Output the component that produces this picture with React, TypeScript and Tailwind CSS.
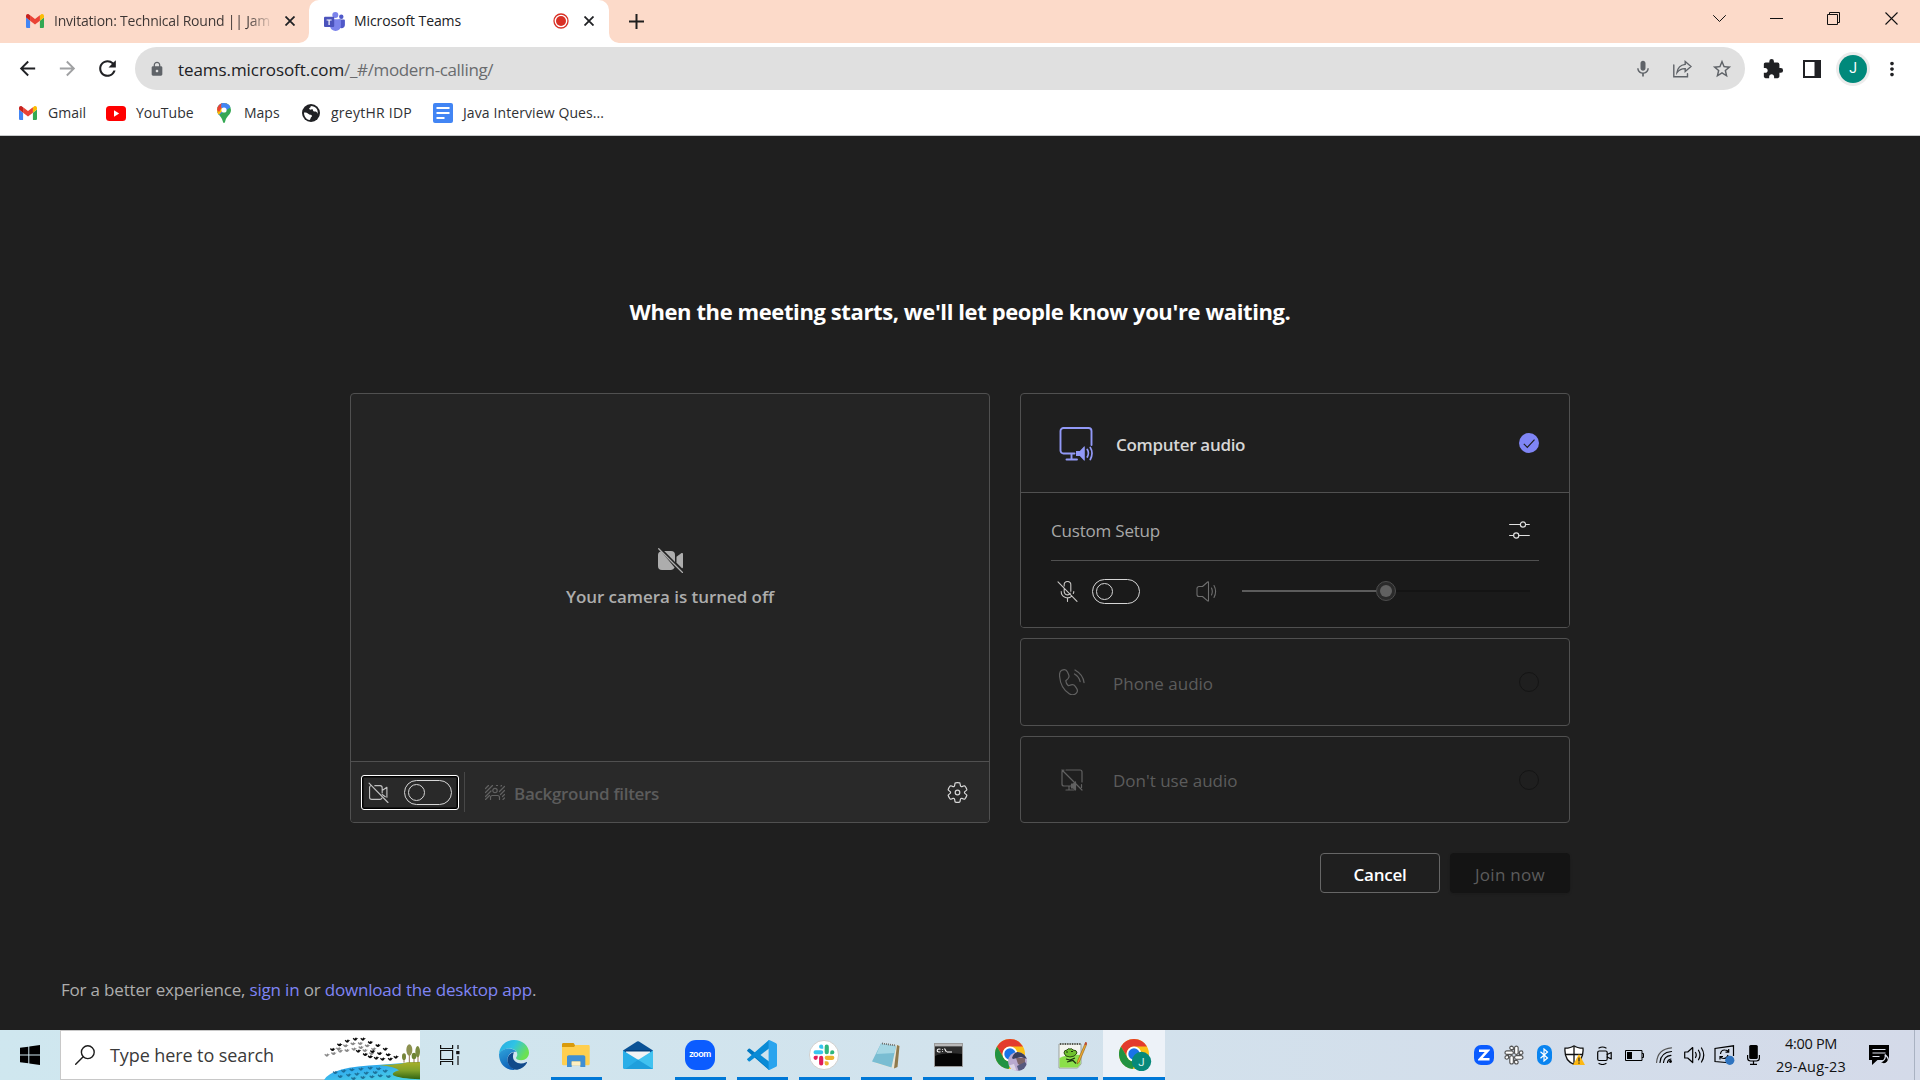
import type { ReactNode, SVGProps } from "react";
import { MdArrowBack, MdArrowForward, MdExtension, MdLock, MdMic, MdMoreVert, MdRefresh, MdStarBorder } from "react-icons/md";

type IconProps = { className?: string };

function Svg({ children, ...rest }: SVGProps<SVGSVGElement>) {
  return (
    <svg fill="none" stroke="currentColor" strokeLinecap="round" strokeLinejoin="round" {...rest}>
      {children}
    </svg>
  );
}

/* ---------- brand icons ---------- */

function Gmail({ className }: IconProps) {
  return (
    <svg viewBox="52 42 88 66" className={className} preserveAspectRatio="none">
      <path fill="#4285f4" d="M58 108h14V74L52 59v43c0 3.32 2.69 6 6 6" />
      <path fill="#34a853" d="M120 108h14c3.32 0 6-2.69 6-6V59l-20 15" />
      <path fill="#fbbc04" d="M120 48v26l20-15v-8c0-7.42-8.47-11.65-14.4-7.2" />
      <path fill="#ea4335" d="M72 74V48l24 18 24-18v26L96 92" />
      <path fill="#c5221f" d="M52 51v8l20 15V48l-5.6-4.2c-5.94-4.45-14.4-.22-14.4 7.2" />
    </svg>
  );
}

function TeamsLogo({ className }: IconProps) {
  return (
    <svg viewBox="0 0 21 19" className={className}>
      <circle cx="17.3" cy="4.8" r="2.2" fill="#5059c9" />
      <circle cx="11.3" cy="3.1" r="3" fill="#7b83eb" />
      <path d="M14.5 7.5H20c.5 0 .9.4.9.9v4.4c0 2-1.5 3.4-3.3 3.4-1.6 0-3.1-1.2-3.1-3.2z" fill="#5059c9" />
      <path d="M6 7.3h10c.5 0 .9.4.9.9v5.6c0 2.900-2.400 5.200-5.300 5.200S6 16.700 6 13.800z" fill="#7b83eb" />
      <rect x="0" y="4.800" width="10.200" height="10.200" rx="1" fill="#4b53bc" />
      <path d="M2.600 7.400h5v1.200H5.700v4.400H4.500V8.600H2.600z" fill="#fff" />
    </svg>
  );
}

function YouTube({ className }: IconProps) {
  return (
    <svg viewBox="0 0 20 15" className={className}>
      <rect width="20" height="15" rx="3.500" fill="#f00" />
      <path d="M8 4.300v6.400l5.200-3.200z" fill="#fff" />
    </svg>
  );
}

function MapsPin({ className }: IconProps) {
  return (
    <svg viewBox="0 0 14 20" className={className}>
      <defs>
        <clipPath id="pin">
          <path d="M7 0a7 7 0 0 1 7 7c0 4.500-4.500 6-5.700 11-.3 1.200-.6 2-1.300 2s-1-.8-1.300-2C4.500 13 0 11.500 0 7a7 7 0 0 1 7-7" />
        </clipPath>
      </defs>
      <g clipPath="url(#pin)">
        <rect width="14" height="20" fill="#34a853" />
        <path d="M0 14 14 2V-1H0z" fill="#4285f4" />
        <path d="M-1 3 5 8l-6 7z" fill="#fbbc04" />
        <path d="M-1 15 12 0h-4L0 10z" fill="#fbbc04" />
        <path d="M-1 0h6l0 4-3 5-3-3z" fill="#ea4335" />
        <path d="M4.500 0H14v4L8 8 4 4z" fill="#4285f4" />
        <circle cx="7" cy="7" r="2.600" fill="#fff" />
      </g>
    </svg>
  );
}

function Globe({ className }: IconProps) {
  return (
    <svg viewBox="0 0 18 18" className={className}>
      <circle cx="9" cy="9" r="9" fill="#202124" />
      <path d="M2 8.500c2 0 3.600.3 5 1.800 1 .9 2.600.2 2.900 1.500.2 1-.9 1.300-1.200 2.200-.3.800-.2 1.500-1.100 2C4.300 15.400 2 12.500 2 8.500M8.500 2c.8.700 0 1.600-.9 2-.9.300-.3 1.400.4 1.600.9.200 1.600-.8 2.500-.3.700.4.300 1.500 1 2 .8.600 2 0 3 .6.900.6 1.200 1.700 1 2.600C16.700 6 13.800 1.900 8.500 2" fill="#fff" />
    </svg>
  );
}

function DocsForm({ className }: IconProps) {
  return (
    <svg viewBox="0 0 20 20" className={className}>
      <rect width="20" height="20" rx="2" fill="#4285f4" />
      <path d="M3.500 5h13M3.500 10h13M3.500 15h8" stroke="#fff" strokeWidth="2" />
    </svg>
  );
}

const SLACK = [
  "M19.712.133a5.381 5.381 0 0 0-5.376 5.387 5.381 5.381 0 0 0 5.376 5.386h5.376V5.52A5.381 5.381 0 0 0 19.712.133m0 14.365H5.376A5.381 5.381 0 0 0 0 19.884a5.381 5.381 0 0 0 5.376 5.387h14.336a5.381 5.381 0 0 0 5.376-5.387 5.381 5.381 0 0 0-5.376-5.386",
  "M53.76 19.884a5.381 5.381 0 0 0-5.376-5.386 5.381 5.381 0 0 0-5.376 5.386v5.387h5.376a5.381 5.381 0 0 0 5.376-5.387m-14.336 0V5.52A5.381 5.381 0 0 0 34.048.133a5.381 5.381 0 0 0-5.376 5.387v14.364a5.381 5.381 0 0 0 5.376 5.387 5.381 5.381 0 0 0 5.376-5.387",
  "M34.048 54a5.381 5.381 0 0 0 5.376-5.387 5.381 5.381 0 0 0-5.376-5.386h-5.376v5.386A5.381 5.381 0 0 0 34.048 54m0-14.365h14.336a5.381 5.381 0 0 0 5.376-5.386 5.381 5.381 0 0 0-5.376-5.387H34.048a5.381 5.381 0 0 0-5.376 5.387 5.381 5.381 0 0 0 5.376 5.386",
  "M0 34.249a5.381 5.381 0 0 0 5.376 5.386 5.381 5.381 0 0 0 5.376-5.386v-5.387H5.376A5.381 5.381 0 0 0 0 34.25m14.336-.001v14.364A5.381 5.381 0 0 0 19.712 54a5.381 5.381 0 0 0 5.376-5.387V34.25a5.381 5.381 0 0 0-5.376-5.387 5.381 5.381 0 0 0-5.376 5.387",
];
const SLACK_COLORS = ["#36c5f0", "#2eb67d", "#ecb22e", "#e01e5a"];

function SlackApp() {
  return (
    <svg viewBox="-24 -24 102 102" className="size-[30px]">
      <circle cx="27" cy="27" r="49.500" fill="#fff" stroke="#c9c4c0" strokeWidth="2.500" />
      <g transform="translate(-8.600 -8.600) scale(1.320)">
        {SLACK.map((d, i) => (
          <path key={i} d={d} fill={SLACK_COLORS[i]} />
        ))}
      </g>
    </svg>
  );
}

function Edge() {
  return (
    <svg viewBox="0 0 30 30" className="size-[30px]">
      <defs>
        <linearGradient id="e1" x1="0" y1="0" x2="1" y2=".45">
          <stop offset="0" stopColor="#2aa9e0" />
          <stop offset=".5" stopColor="#2fc3e6" />
          <stop offset="1" stopColor="#6be152" />
        </linearGradient>
        <linearGradient id="e2" x1="0" y1="0" x2=".4" y2="1">
          <stop offset="0" stopColor="#2fa4dc" />
          <stop offset="1" stopColor="#0f62b8" />
        </linearGradient>
      </defs>
      <path d="M0 14C.5 6 7 0 15 0c8.500 0 15 6 15 12.700 0 4.500-3.500 7.500-7.800 7.500-3.400 0-5.200-1.200-5.200-2.200 0-.8 1.300-1.300 1.300-3.500 0-3.500-3.300-6-7.800-6C6 8.500 2 10.500 0 14" fill="url(#e1)" />
      <path d="M0 14c1.800-3.600 5.500-5.500 9.500-5.500 3.600 0 6.600 1.500 8 3.500-4.500-1-9 2.500-9 7.500 0 4.500 3 8.500 8 10.300C7 31 0 24 0 14" fill="url(#e2)" />
      <path d="M15 12.300c-3.800.7-6.500 3.700-6.500 7.600 0 5.600 4.600 9.900 9.900 9.900 4.300-.9 7.600-3.300 9.600-7 .2-.6-.3-.9-.8-.6-6.500 3.300-13.200 0-13.200-5.400 0-1.900.4-3.200 1-4.500" fill="#114a8b" />
    </svg>
  );
}

function Explorer() {
  return (
    <svg viewBox="0 0 28 25" className="h-[25px] w-7">
      <path d="M0 1.500C0 .7.500 0 1.400 0h9.400c.8 0 1.200.4 1.500 1L14 4H0z" fill="#d99a0b" />
      <path d="M0 4h12l1.500-2h13c.7 0 1.200.5 1.200 1.200V21c0 .7-.5 1.200-1.200 1.200H1.200C.5 22.200 0 21.700 0 21z" fill="#ffcf4f" />
      <path d="M5 24V14c0-1 .8-1.800 1.800-1.800h14.700c1 0 1.800.8 1.800 1.800v10h-5v-5.500H9.700V24z" fill="#3f8fd4" />
      <path d="M9.700 18.500h8.600V22H9.700z" fill="#fff0c2" />
    </svg>
  );
}

function Mail() {
  return (
    <svg viewBox="0 0 30 29" className="h-[29px] w-[30px]">
      <path d="M0 9.500 14 .5q1-.6 2 0l14 9v8H0z" fill="#0a5296" />
      <path d="M3 9h24v9H3z" fill="#f3f3f5" />
      <path d="M3 9h24v1.500H3z" fill="#083f78" />
      <path d="M0 9.500 30 28H1.500Q0 28 0 26.500z" fill="#2aaee8" />
      <path d="M30 9.500V28H2l13-9z" fill="#41c2f0" />
      <path d="M15 18.700 30 28H2z" fill="#1f9fdc" />
    </svg>
  );
}

function Zoom() {
  return (
    <div className="flex size-[30px] items-center justify-center rounded-[11px] bg-[#0b5cff] pb-0.5 font-['Lato'] text-[9.500px] leading-none font-bold tracking-[-0.4px] text-white">
      zoom
    </div>
  );
}

function VsCode() {
  return (
    <svg viewBox="0 0 30 30" className="size-[30px]">
      <path d="M22 .5 8.500 13 3 8.800q-.7-.5-1.400 0L.4 9.900q-.7.700 0 1.400L22 30z" fill="#0078c2" />
      <path d="M22 29.500 8.500 17 3 21.200q-.7.500-1.400 0L.4 20.100q-.7-.7 0-1.400L22 0z" fill="#0a8bd6" />
      <path d="M22 8.500 13.500 15l8.500 6.500z" fill="#cfe3ee" />
      <path d="M21.300.2q.8-.4 1.600 0l6.200 3q.9.500.9 1.500v20.600q0 1-.9 1.500l-6.200 3q-1.200.5-2.200-.4.900.3.900-1V1.600q0-1.300-.3-1.400" fill="#2aa4ee" />
    </svg>
  );
}

function Notepad() {
  return (
    <svg viewBox="0 0 29 27" className="h-[27px] w-[29px]">
      <path d="M10 1 25 3l2.500 1-2 21-3.500 1.500-18-5z" fill="#e9e6d8" />
      <path d="m25 3 2.500 1-2 21-3.500 1.500z" fill="#8f7a4c" />
      <path d="m9 1.500 15 2.500-4.500 21.500L0 19.500z" fill="#79bdd2" />
      <path d="m9 1.500 15 2.500-1.500 7L4.500 12z" fill="#a5d7e4" />
      <path d="M10 1.500 24 3.500" stroke="#6a6f72" strokeWidth="1.800" strokeDasharray="1 1" />
    </svg>
  );
}

function Cmd() {
  return (
    <svg viewBox="0 0 29 24" className="h-6 w-[29px]">
      <rect x=".5" y=".5" width="28" height="23" fill="#050505" stroke="#9a9a9a" />
      <rect x="1" y="1" width="27" height="2.500" fill="#b9b9b9" />
      <path d="M1 13C7 10 18 9.500 28 11V4H1z" fill="#3d3d3d" opacity=".7" />
      <path d="M6.500 6.200Q3.200 5.500 3.200 7.500T6.500 8.700M8.500 6v.8M8.500 8v.8M10.500 5.500l2 3.500M13 9h5" stroke="#fff" fill="none" strokeWidth="1.100" />
    </svg>
  );
}

function Chrome({ badge }: { badge: ReactNode }) {
  return (
    <svg viewBox="0 0 33 32" className="ml-[2px] h-8 w-[33px]">
      <circle cx="15" cy="15" r="15" fill="#fbc116" />
      <path d="M15 0a15 15 0 0 1 13 7.500H15A7.500 7.500 0 0 0 8.500 18.700L2 7.500A15 15 0 0 1 15 0" fill="#e33b2e" />
      <path d="M2 7.500 8.500 18.750A7.500 7.500 0 0 0 15 22.500h2.800L13.500 30A15 15 0 0 1 2 7.500" fill="#229342" />
      <circle cx="15" cy="15" r="7.500" fill="#fff" />
      <circle cx="15" cy="15" r="5.700" fill="#1a73e8" />
      {badge}
    </svg>
  );
}

function PhotoBadge() {
  return (
    <g>
      <defs>
        <clipPath id="photo">
          <circle cx="22.500" cy="22.500" r="9.500" />
        </clipPath>
      </defs>
      <g clipPath="url(#photo)">
        <rect x="12" y="12" width="21" height="21" fill="#b9a9cf" />
        <path d="M17 19q2-7 8-6 7 0 8 5l-1 2-6-2-8 2z" fill="#3b3f5c" />
        <path d="M21 19h9v5q-3 4-7 1z" fill="#7d6468" />
        <path d="M12 27l7-2 3 8H12z" fill="#ddd5e8" />
        <path d="m22 27 8-4 5 6-6 5-5-1z" fill="#57597f" />
      </g>
    </g>
  );
}

function LetterBadge() {
  return (
    <g>
      <circle cx="22.500" cy="22.500" r="9.700" fill="#07897a" />
      <text x="22.500" y="26.700" textAnchor="middle" fill="#d5f0ec" fontSize="11.500" fontFamily="Roboto">
        J
      </text>
    </g>
  );
}

function NotepadPlus() {
  return (
    <svg viewBox="0 0 29 28" className="h-7 w-[29px]">
      <path d="M1 3h22v20l-3.500 4H1z" fill="#f4f5f0" stroke="#8b8f88" strokeWidth=".8" />
      <path d="M2 3h21" stroke="#55584f" strokeWidth="2" strokeDasharray="1.200 1.200" />
      <path d="M1.500 17q10-5 21-3v9l-3 3.500h-18z" fill="#8be04a" />
      <path d="M6 12q0-3 3-3 1-2 3-1 2-1 3 1 4 0 4 3-2 4-7 4-5 0-6-4" fill="#6fc22e" stroke="#2b4b12" />
      <path d="M8 11h2M13 10.500h2M8 18l4 1 5-2M9 21l6-1.500 3 3" stroke="#1d3210" strokeWidth="1.200" fill="none" />
      <path d="m27.500 1.500-8 18.500-.5 3 2.300-2L29 2.500z" fill="#f0ac2f" stroke="#8c5a17" strokeWidth=".6" />
      <path d="m26.500 3.500 1-2.500 1.500.8-.8 2.400z" fill="#c2453a" />
    </svg>
  );
}

/* ---------- meeting icons ---------- */

function CameraOff({ className }: IconProps) {
  return (
    <Svg viewBox="0 0 20 20" className={className} strokeWidth="1.100">
      <path d="M3 3.300A2 2 0 0 0 1.500 5.300v9.200a2 2 0 0 0 2 2h8a2 2 0 0 0 1.800-1.200M6.500 3.500h5a2 2 0 0 1 2 2v5M13.500 8l4.500-3v9.500M13.500 12l3 2" />
      <path d="m1 1 18 18.500" />
    </Svg>
  );
}

function CameraOffFilled() {
  return (
    <svg viewBox="0 0 25 25" className="size-[25px]" fill="#adadad">
      <path d="M3.200 3.600A3.500 3.500 0 0 0 0 7v11a4 4 0 0 0 4 4h9a4 4 0 0 0 3.600-2.400z" />
      <path d="M6.200 3H13a4 4 0 0 1 4 4v7z" />
      <path d="m18.500 8.800 5-3.700q1.500-.7 1.500.8v13q0 1.500-1 1.400l-5.500-5.500z" />
      <path d="m.7.700 23.800 23.800" stroke="#adadad" strokeWidth="1.300" strokeLinecap="round" />
    </svg>
  );
}

function BackgroundIcon() {
  return (
    <Svg viewBox="0 0 20 15" className="h-[15px] w-5 shrink-0" strokeWidth="1.200">
      <path d="M.5 3.500 3.500.5M.5 7.500l7-7M.5 11.500l5.500-5.500M.5 14.500l4-4M16 1l.5-.5M14.500 6.500l5-5M15.500 9.500l4-4M17.500 11.500l2-2M18 14.500l1.500-1.500M11.500.5h1" />
      <circle cx="10" cy="5.500" r="2.200" />
      <path d="M5.500 14.500v-2a2 2 0 0 1 2-2h5a2 2 0 0 1 2 2v2" />
    </Svg>
  );
}

function Gear() {
  return (
    <Svg viewBox="0 0 20 20" className="size-[23px] text-[#d6d6d6]" strokeWidth="1.050">
      <path d="M1.910 7.380A8.500 8.500 0 0 1 3.700 4.300a.5.5 0 0 1 .54-.13l1.920.68a1 1 0 0 0 1.320-.76l.36-2a.5.500 0 0 1 .4-.4 8.530 8.530 0 0 1 3.550 0c.2.040.35.2.38.4l.37 2a1 1 0 0 0 1.320.76l1.920-.68a.5.500 0 0 1 .54.130 8.500 8.500 0 0 1 1.780 3.080c.06.200 0 .4-.15.540l-1.560 1.320a1 1 0 0 0 0 1.520l1.560 1.320a.5.500 0 0 1 .15.540 8.500 8.500 0 0 1-1.780 3.080.5.500 0 0 1-.54.130l-1.920-.68a1 1 0 0 0-1.320.76l-.37 2a.5.500 0 0 1-.38.400 8.530 8.530 0 0 1-3.560 0 .5.500 0 0 1-.39-.4l-.36-2a1 1 0 0 0-1.320-.76l-1.920.68a.5.500 0 0 1-.54-.13 8.500 8.500 0 0 1-1.780-3.080.5.500 0 0 1 .15-.54l1.560-1.320a1 1 0 0 0 0-1.520L2.060 7.920a.5.500 0 0 1-.15-.54Z" />
      <circle cx="10" cy="10" r="2" />
    </Svg>
  );
}

function ComputerAudio() {
  return (
    <Svg viewBox="0 0 34 34" className="mt-px size-[34px] text-[#9299f7]" strokeWidth="1.900">
      <path d="M15.500 26.500H4.500a3 3 0 0 1-3-3V4a3 3 0 0 1 3-3h25a3 3 0 0 1 3 3v14M12.500 27v5.500M7.500 32.500h10.500" />
      <path d="M17 24h3.800l4.200-4.500q.8-.5.800.5v13q0 1-.8.500l-4.200-4.500H17z" fill="currentColor" stroke="none" />
      <path d="M28.300 22.500q2.200 3.500 0 7.500M31.300 20.500q3.400 5.500 0 12" strokeWidth="1.700" />
    </Svg>
  );
}

function MicOff() {
  return (
    <Svg viewBox="0 0 21 21" className="size-[21px] text-[#c8c6c4]" strokeWidth="1.100">
      <path d="M7.200 5V3.800a3.300 3.300 0 0 1 6.600 0v6.500M13.300 12.300A3.300 3.300 0 0 1 7.200 10.500V7.500M4.200 10.500a6.300 6.300 0 0 0 10.600 4.600M16.300 12.500q.5-1 .5-2M10.500 17v3.500M1 .8l19 19.500" />
    </Svg>
  );
}

function Speaker() {
  return (
    <Svg viewBox="0 0 21 21" className="size-[21px] text-[#6e6e6e]" strokeWidth="1.100">
      <path d="M12.500 1.500v18q0 1-.9.400l-5.100-4.400H3a2 2 0 0 1-2-2v-6a2 2 0 0 1 2-2h3.500L11.600 1q.9-.6.900.5M15.500 7q1.600 3.500 0 7M18 4.500q3.200 6 0 12" />
    </Svg>
  );
}

function PhoneIcon() {
  return (
    <Svg viewBox="0 0 26 26" className="size-[26px] text-[#616161]" strokeWidth="1.300">
      <path d="M2.500 1.600 4.300 1a4 4 0 0 1 4.800 2.200l1.300 2.900a4 4 0 0 1-.9 4.500L7.300 12.600q.1 2.800 2.800 5.400l2.900-.9a4 4 0 0 1 4.500 1.600l1.600 2.400a4 4 0 0 1-.6 5l-1 .8q-3 2-6.500-.2Q1.500 20.500.6 7.500.300 3 2.500 1.600" transform="scale(.93)" />
      <path d="M16 1q8 4.500 9 12.500M15.500 5q4.700 2.800 5.600 7.500" />
    </Svg>
  );
}

function NoAudio() {
  return (
    <Svg viewBox="0 0 22 22" className="size-[22px] text-[#616161]" strokeWidth="1.200">
      <path d="M3 1A2 2 0 0 0 1 3v12a2 2 0 0 0 2 2h7M5 1h14a2 2 0 0 1 2 2v10M8 17.500V21M5 21h8M1 1l20 20M20.500 15.500v3" />
      <path d="M10.500 15h2l2-2v8l-2-2h-2z" fill="currentColor" />
    </Svg>
  );
}

function SetupSliders() {
  return (
    <Svg viewBox="0 0 21 18" className="mb-px h-[18px] w-[21px] text-[#e0e0e0]" strokeWidth="1.200">
      <path d="M.6 3.500h10.600M16.800 3.500h3.500M.6 14.500h4M9.800 14.500h10.500" />
      <circle cx="14" cy="3.500" r="2.600" />
      <circle cx="7.200" cy="14.500" r="2.600" />
    </Svg>
  );
}

function Toggle() {
  return (
    <div className="flex h-[25px] w-12 items-center rounded-full border border-[#d6d6d6] pl-[3px]">
      <div className="size-[17px] rounded-full border border-[#d6d6d6]" />
    </div>
  );
}

/* ---------- browser ---------- */

function TabStrip() {
  return (
    <div className="flex h-[43px] bg-[#fcdac9]">
      <div className="flex h-[42px] w-[309px] items-center pl-[26px]">
        <Gmail className="h-[14px] w-[18px]" />
        <span className="mb-0.5 ml-[10px] w-[219px] overflow-hidden bg-linear-to-r from-[#3c3533] from-88% to-[#fcdac9] bg-clip-text text-[14px] tracking-[-0.21px] whitespace-nowrap text-transparent">
          Invitation: Technical Round || Jam
        </span>
        <TabClose className="ml-3" />
      </div>
      <div className="relative flex h-[43px] w-[300px] items-center rounded-t-[10px] bg-white pb-px pl-[15px]">
        <svg viewBox="0 0 10 10" className="absolute bottom-0 -left-2.5 size-2.5">
          <path d="M10 0v10H0A10 10 0 0 0 10 0" fill="#fff" />
        </svg>
        <svg viewBox="0 0 10 10" className="absolute -right-2.5 bottom-0 size-2.5">
          <path d="M0 0v10h10A10 10 0 0 1 0 0" fill="#fff" />
        </svg>
        <TeamsLogo className="h-[19px] w-[21px]" />
        <span className="mb-0.5 ml-[9px] w-[201px] text-[14px] tracking-[-0.09px] text-[#202124]">Microsoft Teams</span>
        <svg viewBox="0 0 16 16" className="-ml-[2px] size-4">
          <circle cx="8" cy="8" r="7" fill="none" stroke="#d93025" strokeWidth="1.300" />
          <circle cx="8" cy="8" r="5" fill="#d93025" />
        </svg>
        <TabClose className="ml-[15px]" />
      </div>
      <div className="flex h-[42px] flex-1 items-center pl-[20px]">
        <svg viewBox="0 0 15 15" className="size-[15px]" stroke="#1f1f1f" strokeWidth="2">
          <path d="M7.500 0v15M0 7.500h15" />
        </svg>
      </div>
      <div className="flex h-[37px] items-center pr-[22px] text-[#111]">
        <Svg viewBox="0 0 13 7" className="h-[7px] w-[13px]" strokeWidth="1">
          <path d="m.5.500 6 6 6-6" />
        </Svg>
        <svg viewBox="0 0 13 13" className="ml-11 size-[13px]" stroke="currentColor">
          <path d="M0 6.500h13" />
        </svg>
        <svg viewBox="0 0 13 13" className="ml-11 size-[13px]" fill="none" stroke="currentColor" strokeWidth="1">
          <path d="M.5 2.500h10v10H.500zM2.500 2.500v-2h10v10h-2" />
        </svg>
        <svg viewBox="0 0 13 13" className="ml-[45px] size-[13px]" stroke="currentColor" strokeWidth="1.100">
          <path d="m.5.500 12 12M12.500.500l-12 12" />
        </svg>
      </div>
    </div>
  );
}

function TabClose({ className = "" }: IconProps) {
  return (
    <svg viewBox="0 0 10 10" className={`size-2.5 ${className}`} stroke="#202124" strokeWidth="1.800">
      <path d="m.5.500 9 9M9.500.500l-9 9" />
    </svg>
  );
}

function Toolbar() {
  return (
    <div className="flex h-12 items-center bg-white pt-[3px] text-[#202124]">
      <MdArrowBack className="ml-[16px] size-[23px]" />
      <MdArrowForward className="ml-[17px] size-[23px] text-[#a0a1a3]" />
      <MdRefresh className="ml-[16px] size-[25px]" />
      <div className="ml-[15px] flex h-[43px] w-[1610px] items-center rounded-full bg-[#e0e0e0] pt-px pr-[12px] pl-[14px] text-[#5f6368]">
        <MdLock className="size-4" />
        <span className="ml-[13px] flex-1 pt-px text-[17px]">
          <span className="tracking-[-0.07px] text-[#202124]">teams.microsoft.com</span>
          <span className="tracking-[-0.36px] text-[#696b6e]">/_#/modern-calling/</span>
        </span>
        <MdMic className="size-5" />
        <Svg viewBox="0 0 19 18" className="ml-[20px] h-[18px] w-[19px]" strokeWidth="1.400" strokeLinejoin="miter">
          <path d="M.8 5v11.700h13.700v-3" />
          <path d="M12.200 1.500 18 6.500l-5.800 5V8.600q-5-.2-8.200 4Q5 5.300 12.200 4.400z" />
        </Svg>
        <MdStarBorder className="ml-[19px] size-[22px]" />
      </div>
      <MdExtension className="ml-[17px] size-[22px]" />
      <svg viewBox="0 0 18 18" className="ml-[19px] size-[18px]">
        <path d="M1 1h16v16H1z" fill="none" stroke="#202124" strokeWidth="2" />
        <path d="M11.500 1H17v16h-5.500z" fill="#202124" />
      </svg>
      <div className="ml-[15px] flex size-[34px] items-center justify-center rounded-full bg-[#ececec]">
        <div className="flex size-7 items-center justify-center rounded-full bg-[#00897b] font-['Roboto'] text-[14px] text-white">J</div>
      </div>
      <MdMoreVert className="ml-[11px] size-[22px]" />
    </div>
  );
}

function Bookmarks() {
  return (
    <div className="flex h-[45px] items-center border-b border-[#c8cacb] bg-white pl-[19px] text-[14px] text-[#303134]">
      <Gmail className="h-[14px] w-[18px]" />
      <span className="mb-0.5 ml-[11px] w-[58px]">Gmail</span>
      <YouTube className="h-[15px] w-5" />
      <span className="mb-0.5 ml-[10px] w-[81px]">YouTube</span>
      <MapsPin className="h-5 w-[14px]" />
      <span className="mb-0.5 ml-[13px] w-[58px]">Maps</span>
      <Globe className="size-[18px]" />
      <span className="mb-0.5 ml-[11px] w-[102px] tracking-[0.25px]">greytHR IDP</span>
      <DocsForm className="size-5" />
      <span className="mb-0.5 ml-[10px] tracking-[0.1px]">Java Interview Ques...</span>
    </div>
  );
}

/* ---------- meeting page ---------- */

function VideoCard() {
  return (
    <div className="flex h-[430px] w-[640px] flex-col overflow-hidden rounded-[4px] border border-[#505050] bg-[#242424]">
      <div className="flex flex-1 flex-col items-center pt-[154px]">
        <CameraOffFilled />
        <span className="mt-[12px] text-[17px] leading-6 font-semibold tracking-[-0.05px] text-[#adadad]">Your camera is turned off</span>
      </div>
      <div className="flex h-[61px] items-center border-t border-[#505050] bg-[#292929] pr-[20px] pl-[10px]">
        <div className="flex h-[35px] w-[98px] items-center justify-between rounded-[3px] border border-white px-[6px] shadow-[inset_0_0_0_1.500px_#000]">
          <CameraOff className="size-[21px] text-[#c0c0c0]" />
          <Toggle />
        </div>
        <div className="ml-[5px] h-10 w-px bg-[#474747]" />
        <div className="ml-[20px] flex flex-1 items-center text-[#616161]">
          <BackgroundIcon />
          <span className="ml-[9px] pt-[4px] text-[17px] font-semibold tracking-[-0.32px] text-[#5c5c5c]">Background filters</span>
        </div>
        <Gear />
      </div>
    </div>
  );
}

function AudioOptions() {
  return (
    <div className="flex w-[550px] flex-col">
      <div className="h-[235px] overflow-hidden rounded-[4px] border border-[#505050]">
        <div className="flex h-[98px] items-center px-[30px]">
          <div className="ml-[8px] w-[57px]">
            <ComputerAudio />
          </div>
          <span className="flex-1 pt-[3px] text-[17px] font-semibold tracking-[-0.3px] text-[#d6d6d6]">Computer audio</span>
          <svg viewBox="0 0 20 20" className="size-5">
            <circle cx="10" cy="10" r="10" fill="#7f85f5" />
            <path d="m4.800 10.800 3.500 3.500 7.200-7.600" fill="none" stroke="#1f1f1f" strokeWidth="1.200" />
          </svg>
        </div>
        <div className="h-[136px] border-t border-[#505050] bg-[#1a1a1a] px-[30px]">
          <div className="flex h-[68px] items-center justify-between border-b border-[#505050] pr-[9px] pt-[7px]">
            <span className="mt-[2px] text-[17px] tracking-[-0.2px] text-[#a8a8a8]">Custom Setup</span>
            <SetupSliders />
          </div>
          <div className="flex h-[60px] items-center pl-[6px]">
            <MicOff />
            <div className="ml-[14px]">
              <Toggle />
            </div>
            <div className="ml-[56px]">
              <Speaker />
            </div>
            <div className="ml-[25px] flex items-center">
              <div className="h-[2px] w-[134px] bg-[#5c5c5c]" />
              <div className="flex size-5 items-center justify-center rounded-full border border-[#4d4d4d] bg-[#2b2b2b]">
                <div className="size-3 rounded-full bg-[#616161]" />
              </div>
              <div className="h-[2px] w-[134px] bg-[#141414]" />
            </div>
          </div>
        </div>
      </div>
      <DisabledOption icon={<PhoneIcon />} label="Phone audio" className="mt-[10px] h-[88px]" />
      <DisabledOption icon={<NoAudio />} label="Don't use audio" className="mt-[10px] h-[87px]" />
    </div>
  );
}

function DisabledOption({ icon, label, className }: { icon: ReactNode; label: string; className: string }) {
  return (
    <div className={`flex items-center rounded-[4px] border border-[#505050] px-[30px] ${className}`}>
      <div className="mr-[20px] flex w-[42px] justify-center">{icon}</div>
      <span className="flex-1 pt-[3px] text-[17px] font-medium text-[#5c5c5c]">{label}</span>
      <div className="size-5 rounded-full border border-[#141414]" />
    </div>
  );
}

function Meeting() {
  return (
    <main className="flex h-[894px] flex-col items-center bg-[#1f1f1f]">
      <h1 className="mt-[159px] text-[22px] leading-8 font-bold tracking-[-0.4px] text-white">
        When the meeting starts, we'll let people know you're waiting.
      </h1>
      <div className="mt-[66px] flex w-[1220px] justify-between">
        <VideoCard />
        <AudioOptions />
      </div>
      <div className="mt-[30px] flex w-[1220px] justify-end gap-2.5 text-[17px] font-semibold">
        <button className="h-10 w-[120px] rounded-[4px] border border-[#666] pt-[4px] tracking-[-0.23px] text-white">Cancel</button>
        <button className="h-10 w-[120px] rounded-[4px] bg-[#141414] pt-[3px] font-medium tracking-[0.3px] text-[#5c5c5c] shadow">Join now</button>
      </div>
      <p className="mt-[85px] self-start pl-[61px] text-[17px] leading-6 tracking-[-0.19px] text-[#adadad]">
        For a better experience, <span className="text-[#7f85f5]">sign in</span> or{" "}
        <span className="text-[#7f85f5]">download the desktop app</span>.
      </p>
    </main>
  );
}

/* ---------- taskbar ---------- */

const BIRDS: [number, number, number][] = [
  [10, 76, 0], [27, 59, 1], [48, 45, 1], [71, 34, 1], [95, 28, 1], [118, 28, 1], [140, 38, 1], [163, 47, 1],
  [30, 71, 0], [50, 64, 0], [45, 57, 0], [66, 48, 0], [88, 42, 0], [110, 41, 0], [131, 48, 0], [150, 58, 0],
  [70, 62, 0], [91, 58, 0], [112, 53, 0], [104, 64, 1], [124, 62, 0], [144, 71, 0], [125, 74, 1], [147, 65, 1],
  [140, 81, 1], [158, 85, 1], [168, 71, 1], [185, 58, 1], [177, 88, 1], [194, 75, 1], [200, 88, 1], [217, 82, 1],
];

const REFLECTIONS: [number, number][] = [
  [35, 128], [60, 124], [85, 120], [112, 118], [140, 115], [165, 117], [50, 140], [75, 136], [100, 133],
  [128, 130], [155, 128], [185, 124], [90, 146], [118, 143], [145, 141], [170, 138], [195, 140],
];

function FlockArt() {
  const bird = "M-7-5l4 3 4-4 2 3 5 0-4 3q-1 4-6 4-4-1-5-4l-2-1z";
  return (
    <svg viewBox="0 0 288 150" className="h-[50px] w-24" preserveAspectRatio="none">
      <defs>
        <linearGradient id="lake" x1="0" y1="0" x2=".7" y2="1">
          <stop offset="0" stopColor="#1788d8" />
          <stop offset=".5" stopColor="#35b2ee" />
          <stop offset="1" stopColor="#4cd0e6" />
        </linearGradient>
        <linearGradient id="grass" x1="0" y1="0" x2="0" y2="1">
          <stop offset="0" stopColor="#a9b02a" />
          <stop offset=".5" stopColor="#7fa02a" />
          <stop offset="1" stopColor="#2f6412" />
        </linearGradient>
      </defs>
      <path d="M0 150Q20 110 170 104L288 95V150z" fill="url(#lake)" />
      <path d="M165 105Q230 104 250 97L288 96V148Q225 146 208 136 200 128 225 121 215 111 165 105" fill="url(#grass)" />
      {BIRDS.map(([x, y, dark], i) => (
        <path key={i} d={bird} transform={`translate(${x} ${y})`} fill={dark ? "#0b0b0b" : "#8a8a8a"} />
      ))}
      {REFLECTIONS.map(([x, y], i) => (
        <path key={i} d={bird} transform={`translate(${x} ${y})`} fill="#14597f" opacity=".75" />
      ))}
      <path d="M240 98V76M256 98V66M270 98V78M282 98V76" stroke="#7d5a33" strokeWidth="2.500" />
      <ellipse cx="240" cy="80" rx="6" ry="10" fill="#77863a" />
      <ellipse cx="256" cy="60" rx="9" ry="17" fill="#8d9150" />
      <ellipse cx="270" cy="78" rx="7" ry="10" fill="#6d8434" />
      <ellipse cx="281" cy="65" rx="7" ry="17" fill="#7b8b40" />
    </svg>
  );
}

function AppSlot({ children, open, active }: { children: ReactNode; open?: boolean; active?: boolean }) {
  return (
    <div className={`flex h-[50px] w-[62px] flex-col items-center ${active ? "bg-[#edf2f8]" : ""}`}>
      <div className="flex h-[47px] items-center pt-[3px]">{children}</div>
      <div className={`h-[3px] ${active ? "w-[62px]" : "w-[51px]"} ${open || active ? "bg-[#0078d7]" : ""}`} />
    </div>
  );
}

function Slot({ children }: { children: ReactNode }) {
  return <div className="flex w-[30px] items-center justify-center">{children}</div>;
}

function Tray() {
  return (
    <div className="ml-auto flex h-[50px] items-center text-black">
      <Slot>
        <div className="flex size-5 items-center justify-center rounded-[7px] bg-[#0b5cff]">
          <svg viewBox="0 0 12 12" className="size-3" fill="none" stroke="#fff" strokeWidth="2.600">
            <path d="M1 1.800h8.500L2 10.200h9.500" />
          </svg>
        </div>
      </Slot>
      <Slot>
        <svg viewBox="-3 -3 60 60" className="size-5" fill="#fff" stroke="#555" strokeWidth="3.500">
          {SLACK.map((d, i) => (
            <path key={i} d={d} />
          ))}
        </svg>
      </Slot>
      <Slot>
        <div className="flex h-5 w-[15px] items-center justify-center rounded-[7px] bg-[#0a84f0]">
          <svg viewBox="0 0 10 14" className="h-[14px] w-2.5" fill="none" stroke="#fff" strokeWidth="1.200">
            <path d="m1.500 3.800 7 6.200L5 13V1l3.500 3-7 6.200" />
          </svg>
        </div>
      </Slot>
      <Slot>
        <svg viewBox="0 0 21 20" className="h-5 w-[21px]">
          <path d="M10 .7Q7 3 1 3.200 0 15.500 10 19.300 20 15.500 19 3.200 13 3 10 .7" fill="#fff" stroke="#111" strokeWidth="1.300" />
          <path d="M10 1v18M1 9.500h18" stroke="#111" strokeWidth="1.300" />
          <path d="m15 9 6 11H9z" fill="#fdb813" />
          <path d="M15 12.500v4M15 17.500v1.200" stroke="#222" strokeWidth="1.200" />
        </svg>
      </Slot>
      <Slot>
        <Svg viewBox="0 0 15 19" className="h-[19px] w-[15px]" strokeWidth="1.200">
          <rect x=".7" y="5" width="9.500" height="9.500" rx="1.500" />
          <path d="m10.200 8.500 4-2v6.500l-4-2M2 2Q5.500 0 9 2M2 17.500q3.500 2 7 0" />
        </Svg>
      </Slot>
      <Slot>
        <svg viewBox="0 0 19 11" className="h-[11px] w-[19px]" fill="none" stroke="currentColor">
          <path d="M.5.500h16.500v10H.500zM17 3.500h1.500v4H17" />
          <path d="M2 2h5v7H2z" fill="currentColor" stroke="none" />
        </svg>
      </Slot>
      <Slot>
        <Svg viewBox="0 0 17 16" className="h-4 w-[17px]" strokeWidth="1.200">
          <path d="M11.500 15.500q.3-3 3.500-3.500M7.500 15.500Q8 9.200 15 8.300M4 15.500Q4.500 5.500 15.500 4.500" />
          <path d="M.6 15.500Q1.500 2 15.500.800" stroke="#555" />
          <circle cx="14.500" cy="14.500" r="1.400" fill="currentColor" stroke="none" />
        </Svg>
      </Slot>
      <Slot>
        <Svg viewBox="0 0 21 18" className="h-[18px] w-[21px]" strokeWidth="1.200">
          <path d="M.7 6v6h3l5 4.500v-15L3.700 6zM11.500 6.500q1.500 2.500 0 5M14.500 4.200q3 4.800 0 9.600M17.500 2q4.500 7 0 14" />
        </Svg>
      </Slot>
      <Slot>
        <svg viewBox="0 0 21 20" className="h-5 w-[21px]" fill="none" stroke="currentColor" strokeWidth="1.200">
          <path d="M12 17.500 1 16.500v-13L19.500.8V11M6.500 9q.5-4.300 4.500-4 2.500 0 3.500 2M14.700 4v3.200h-3.200M14 10q-1 3.500-4.200 3.500-2.500 0-3.500-2M6 14.500v-3h3" />
          <circle cx="15.800" cy="15.300" r="4.600" fill="#2f74c0" stroke="none" />
        </svg>
      </Slot>
      <Slot>
        <svg viewBox="0 0 13 20" className="-ml-px h-5 w-[13px]">
          <rect x="2.200" y="0" width="8.600" height="14" rx="1.500" />
          <path d="M.6 10v3q0 3 3 3h5.800q3 0 3-3v-3M6.500 16v3.500M3 19.400h7" fill="none" stroke="currentColor" strokeWidth="1.200" />
        </svg>
      </Slot>
      <div className="flex w-[84px] flex-col items-center text-[14.500px] leading-[23px] text-[#111]">
        <span className="tracking-[-0.3px]">4:00 PM</span>
        <span className="tracking-[0.2px]">29-Aug-23</span>
      </div>
      <svg viewBox="0 0 21 21" className="ml-[16px] size-[21px]">
        <path d="M0 0h20v15H8.500L3 20v-5H0z" />
        <path d="M3.500 4.500h13M3.500 8h13M3.500 11.500h7" stroke="#dfe4ef" strokeWidth="1.200" />
        <path d="M16 9.500q1.500 5.500-4.500 7.500 3 3.500 6.500.5t-2-8" fill="#000" stroke="#dde2ee" strokeWidth="1.200" />
      </svg>
      <div className="ml-[24px] h-[50px] w-px bg-[#a9b2c2]" />
      <div className="w-[5px]" />
    </div>
  );
}

function Taskbar() {
  return (
    <div className="flex h-[50px] bg-linear-to-r from-[#cfe7ef] via-[#d2e3ed] to-[#d4dae9]">
      <div className="flex w-[60px] items-center justify-center">
        <svg viewBox="0 0 20 20" className="size-5">
          <path d="M0 2.800 8.300 1.700v7.800H0zM9.300 1.500 20 0v9.500H9.300zM0 10.500h8.300v7.800L0 17.200zM9.300 10.500H20V20L9.300 18.500z" />
        </svg>
      </div>
      <div className="flex w-[360px] items-center border border-r-0 border-[#c8c8c8] bg-white pl-[14px]">
        <Svg viewBox="0 0 20 20" className="size-5 text-[#1c1c1c]" strokeWidth="1.400">
          <circle cx="12.800" cy="7.200" r="6.400" />
          <path d="M8.200 11.800.700 19.300" />
        </Svg>
        <span className="ml-[15px] flex-1 text-[18px] tracking-[-0.09px] text-[#3a3a3a]">Type here to search</span>
        <FlockArt />
      </div>
      <div className="flex w-[63px] items-center pl-5">
        <svg viewBox="0 0 20 20" className="size-5" fill="none" stroke="#111" strokeWidth="1.200">
          <path d="M.6 0v3.500h12V0M.6 20v-3.500h12V20M.6 5.500h12v9H.600zM18 0v4M18 11v9" />
          <path d="M16.200 6h3.300v3.200h-3.300z" fill="#111" stroke="none" />
        </svg>
      </div>
      <AppSlot><Edge /></AppSlot>
      <AppSlot open><Explorer /></AppSlot>
      <AppSlot><Mail /></AppSlot>
      <AppSlot open><Zoom /></AppSlot>
      <AppSlot open><VsCode /></AppSlot>
      <AppSlot open><SlackApp /></AppSlot>
      <AppSlot open><Notepad /></AppSlot>
      <AppSlot open><Cmd /></AppSlot>
      <AppSlot open><Chrome badge={<PhotoBadge />} /></AppSlot>
      <AppSlot open><NotepadPlus /></AppSlot>
      <AppSlot active><Chrome badge={<LetterBadge />} /></AppSlot>
      <Tray />
    </div>
  );
}

export default function App() {
  return (
    <div className="h-[1080px] w-[1920px] overflow-hidden bg-[#1f1f1f] font-['Open_Sans','Noto_Sans',sans-serif]">
      <TabStrip />
      <Toolbar />
      <Bookmarks />
      <Meeting />
      <Taskbar />
    </div>
  );
}
